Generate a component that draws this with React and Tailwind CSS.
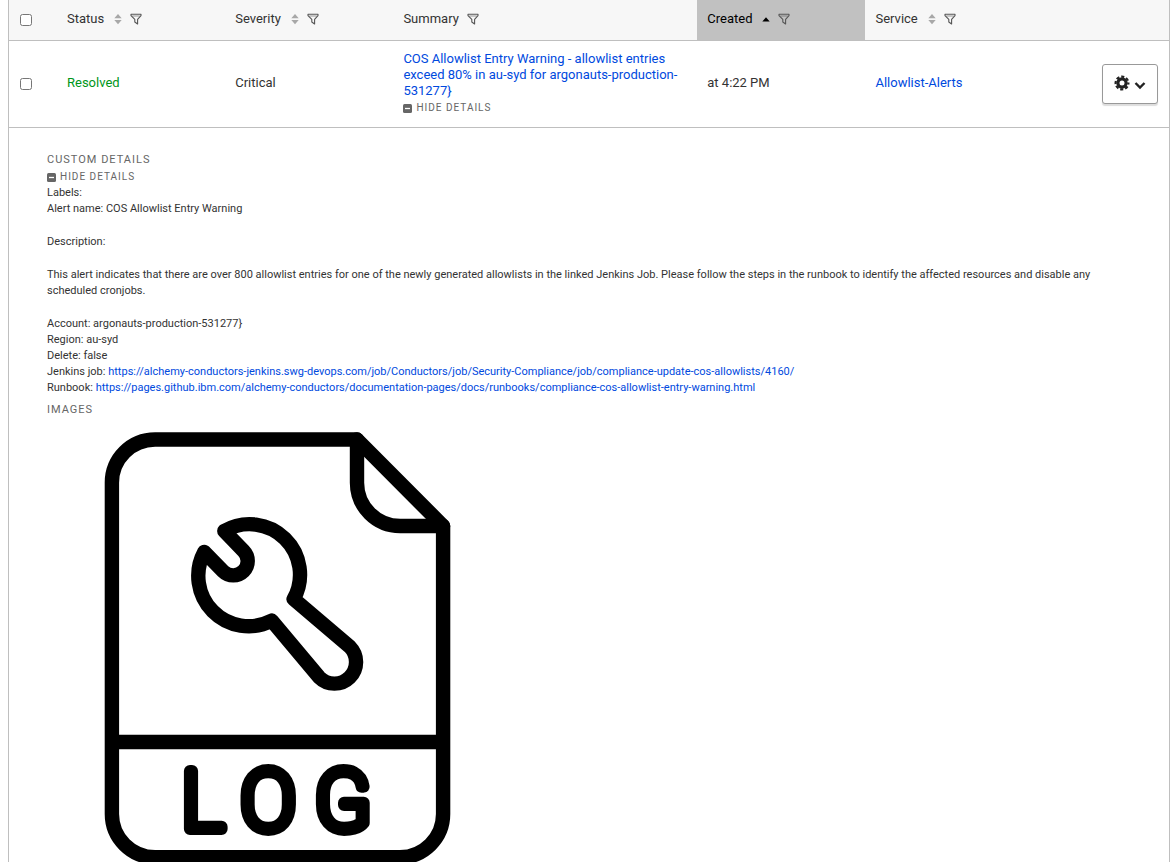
import React from "react";

function FilterIcon() {
  return (
    <svg className="h-3 w-3" viewBox="0 0 12 12" fill="none" stroke="currentColor" strokeWidth="1.1" strokeLinejoin="round" aria-hidden="true">
      <path d="M1 1.2H11V2.6L7.6 6.4V11L4.8 9V6.4L1 2.6Z" />
      <path d="M2.2 3H9.8" strokeWidth="0.6" />
    </svg>
  );
}

function SortIcon({ sorted }) {
  if (sorted) {
    return (
      <svg className="h-3 w-2" viewBox="0 0 8 12" fill="currentColor" aria-hidden="true">
        <path d="M0.3 8.4L4 4.3L7.7 8.4Z" />
      </svg>
    );
  }
  return (
    <svg className="h-3 w-2 text-[#a8a8a8]" viewBox="0 0 8 12" fill="currentColor" aria-hidden="true">
      <path d="M0.3 5.3L4 1L7.7 5.3ZM0.3 6.9H7.7L4 11.2Z" />
    </svg>
  );
}

function HeaderCell({ label, sortable = true, sorted = false, className = "" }) {
  return (
    <th
      scope="col"
      aria-sort={sorted ? "ascending" : undefined}
      className={`h-[41px] border-b border-[#bfbfbf] pb-[3px] pl-2.5 text-left font-normal ${className}`}
    >
      <div className="flex items-center gap-2">
        {sortable ? (
          <button type="button" className="flex items-center gap-2.5">
            {label}
            <SortIcon sorted={sorted} />
          </button>
        ) : (
          <span>{label}</span>
        )}
        <button type="button" aria-label={`Filter by ${label}`} className="text-[#555]">
          <FilterIcon />
        </button>
      </div>
    </th>
  );
}

function HideDetails() {
  return (
    <button type="button" className="mt-px flex items-center gap-1 text-[10px] leading-4 tracking-[1px] text-[#666]">
      <svg className="h-[9px] w-[9px]" viewBox="0 0 9 9" aria-hidden="true">
        <rect width="9" height="9" rx="1.5" fill="#666" />
        <path d="M2 4.5H7" stroke="#fff" strokeWidth="1.3" />
      </svg>
      HIDE DETAILS
    </button>
  );
}

function LogImage() {
  return (
    <svg className="block h-[461px] w-[461px]" viewBox="0 0 461 461" role="img" aria-label="LOG">
      <g fill="none" stroke="#000" strokeWidth="14.4" strokeLinejoin="round" strokeLinecap="round">
        <path d="M396.1 108L310 21.5H108.1A43.2 43.2 0 0 0 64.9 64.7V396A43.2 43.2 0 0 0 108.1 439.2H352.9A43.2 43.2 0 0 0 396.1 396Z" />
        <path d="M310 21.5V64.8A43.2 43.2 0 0 0 353.2 108H396.1" />
        <path d="M64.9 324H396.1" strokeLinecap="butt" />
        <path d="M177.3 113A50.4 50.4 0 0 1 246.7 181L302.8 228.8A21.6 21.6 0 1 1 272.1 259.2L224.7 202.7A50.4 50.4 0 0 1 157.3 134L176.1 153.2A14.4 14.4 0 0 0 196.5 132.8Z" />
      </g>
      <text
        x="135"
        y="411"
        className="fill-black stroke-black font-['Roboto'] text-[81px] font-thin tracking-[20px]"
        strokeWidth="12"
        strokeLinejoin="round"
      >
        LOG
      </text>
    </svg>
  );
}

export default function App() {
  return (
    <main className="bg-white pr-1 pl-2 font-['Roboto','Liberation_Sans',sans-serif] text-[13px] leading-4 text-[#333]">
      <table className="w-full table-fixed border-separate border-spacing-0 border-x border-[#bfbfbf]">
        <thead className="bg-[#f7f7f7]">
          <tr>
            <th scope="col" className="w-12 border-b border-[#bfbfbf] pl-[11px] text-left">
              <input type="checkbox" aria-label="Select all alerts" className="block h-3 w-3" />
            </th>
            <HeaderCell label="Status" className="w-[14.5%]" />
            <HeaderCell label="Severity" className="w-[14.5%]" />
            <HeaderCell label="Summary" sortable={false} className="w-[26.2%]" />
            <HeaderCell label="Created" sorted className="w-[14.5%] bg-[#c1c1c1] text-black" />
            <HeaderCell label="Service" />
            <th scope="col" aria-label="Actions" className="w-20 border-b border-[#bfbfbf]" />
          </tr>
        </thead>
        <tbody>
          <tr>
            <td className="border-b border-[#bfbfbf] pl-[11px]">
              <input type="checkbox" aria-label="Select alert" className="block h-3 w-3" />
            </td>
            <td className="border-b border-[#bfbfbf] pb-0.5 pl-2.5 text-[#00961a]">Resolved</td>
            <td className="border-b border-[#bfbfbf] pb-0.5 pl-2.5">Critical</td>
            <td className="border-b border-[#bfbfbf] pt-2.5 pr-2 pb-[11px] pl-2.5">
              <a href="#alert" className="block text-[#0049de]">
                COS Allowlist Entry Warning - allowlist entries exceed 80% in au-syd for argonauts-production-531277{"}"}
              </a>
              <HideDetails />
            </td>
            <td className="border-b border-[#bfbfbf] pb-0.5 pl-2.5">at 4:22 PM</td>
            <td className="border-b border-[#bfbfbf] pb-0.5 pl-2.5">
              <a href="#service" className="text-[#0049de]">Allowlist-Alerts</a>
            </td>
            <td className="border-b border-[#bfbfbf] pr-[11px]">
              <button
                type="button"
                aria-label="Alert actions"
                className="ml-auto flex h-10 w-14 items-center justify-center gap-1 rounded-[3px] border border-[#999] bg-white text-[#222] shadow-[0_2px_1px_#ddd]"
              >
                <svg className="mb-0.5 h-4 w-4" viewBox="0 0 16 16" fill="none" stroke="currentColor" aria-hidden="true">
                  <circle cx="8" cy="8" r="4.1" strokeWidth="3.2" />
                  <circle cx="8" cy="8" r="6.4" strokeWidth="2.2" strokeDasharray="3.1 1.927" strokeDashoffset="1.55" />
                </svg>
                <svg className="mt-0.5 h-3 w-3" viewBox="0 0 12 12" fill="none" stroke="currentColor" strokeWidth="2.4" aria-hidden="true">
                  <path d="M1.5 4L6 8.5L10.5 4" />
                </svg>
              </button>
            </td>
          </tr>
          <tr>
            <td colSpan={7} className="pt-6 pr-12 pl-[38px]">
              <h2 className="text-[11px] leading-4 tracking-[1px] text-[#666]">CUSTOM DETAILS</h2>
              <HideDetails />
              <div className="flex flex-col gap-[17px] text-[11px] leading-4">
                <div>
                  <p>Labels:</p>
                  <p>Alert name: COS Allowlist Entry Warning</p>
                </div>
                <p>Description:</p>
                <p>
                  This alert indicates that there are over 800 allowlist entries for one of the newly generated allowlists in the linked Jenkins Job. Please follow the steps in the runbook to identify the affected resources and disable any scheduled cronjobs.
                </p>
                <div>
                  <p>Account: argonauts-production-531277{"}"}</p>
                  <p>Region: au-syd</p>
                  <p>Delete: false</p>
                  <p>
                    Jenkins job:{" "}
                    <a className="text-[#0049de]" href="https://alchemy-conductors-jenkins.swg-devops.com/job/Conductors/job/Security-Compliance/job/compliance-update-cos-allowlists/4160/">
                      https://alchemy-conductors-jenkins.swg-devops.com/job/Conductors/job/Security-Compliance/job/compliance-update-cos-allowlists/4160/
                    </a>
                  </p>
                  <p>
                    Runbook:{" "}
                    <a className="text-[#0049de]" href="https://pages.github.ibm.com/alchemy-conductors/documentation-pages/docs/runbooks/compliance-cos-allowlist-entry-warning.html">
                      https://pages.github.ibm.com/alchemy-conductors/documentation-pages/docs/runbooks/compliance-cos-allowlist-entry-warning.html
                    </a>
                  </p>
                </div>
              </div>
              <h2 className="mt-1.5 text-[11px] leading-4 tracking-[1px] text-[#666]">IMAGES</h2>
              <LogImage />
            </td>
          </tr>
        </tbody>
      </table>
    </main>
  );
}
